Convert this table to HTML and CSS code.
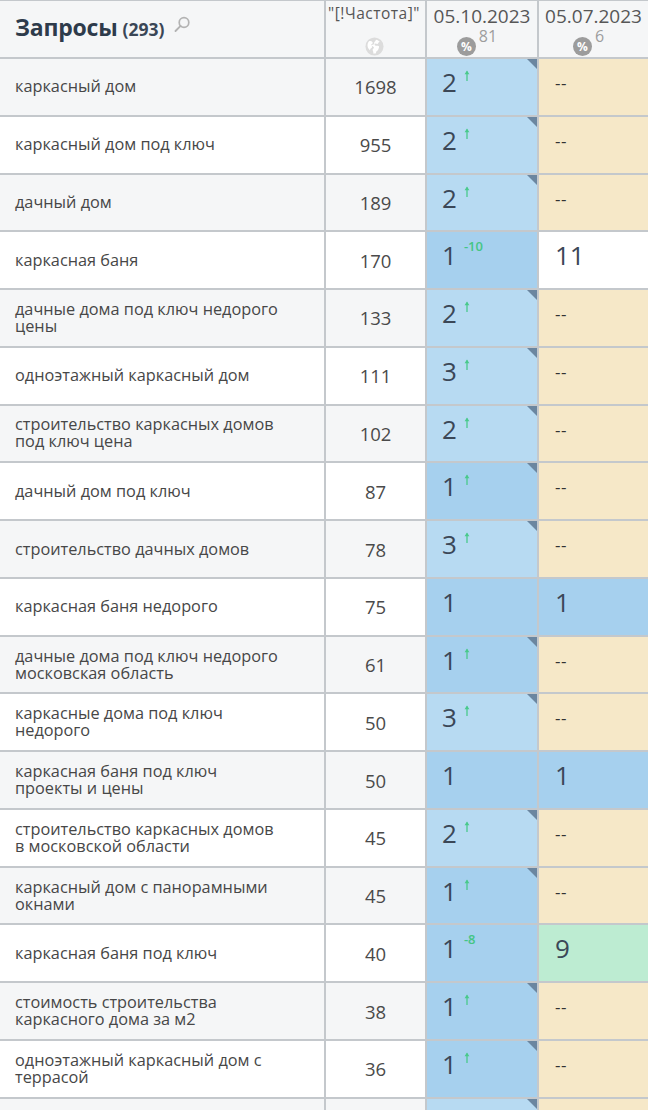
FILE: index.html
```html
<!DOCTYPE html>
<html lang="ru">
<head>
<meta charset="utf-8">
<title>Запросы</title>
<link rel="stylesheet" href="styles.css">
</head>
<body>
<div class="table">
  <div class="row head">
    <div class="cell c-query">
      <span class="title">Запросы</span>
      <span class="count">(293)</span>
      <svg class="search" width="18" height="17" viewBox="0 0 18 17"><circle cx="11" cy="6.5" r="4.8" fill="none" stroke="#b3b3b3" stroke-width="1.7"/><line x1="7.6" y1="9.9" x2="2.5" y2="15" stroke="#b3b3b3" stroke-width="1.9" stroke-linecap="round"/></svg>
    </div>
    <div class="cell c-freq">
      <div class="freq-label">"[!Частота]"</div>
      <svg class="globe" width="19" height="19" viewBox="0 0 20 20"><circle cx="10" cy="10" r="9.5" fill="#dcdcdc"/><path d="M4.2 4.6c1.4-.6 2.8-.2 3.6.6.7.8.2 1.8-.6 2.2-.9.4-.8 1.4-.2 2 .8.8.4 2-.5 2.4-.8.4-1.3 1.3-1.1 2.3-1.4-1-2.4-2.6-2.7-4.3-.2-1.9.3-3.8 1.5-5.2zM11.6 2.8c1.6.3 3 1.1 4 2.3-.8.2-1.5.7-1.7 1.5-.3.9-1.2 1-1.8.5-.7-.6-1.8-.4-2 .5-.2.8.5 1.5 1.3 1.5h2.1c1 0 1.6.8 1.3 1.7l-.8 2.4c-.3.9-1 1.6-1.9 1.900l-.8 2.2c-.9.2-1.8.2-2.7.1.4-1 .3-2.1-.3-3-.6-.9-.3-2 .6-2.4.6-.3.7-1.100.2-1.6-.8-.8-1.9-1-2.9-.7.5-.9 1.4-1.5 2.4-1.7.8-.2 1.3-.9 1.1-1.7-.2-.7.3-1.5.9-1.5z" fill="#fff"/></svg>
    </div>
    <div class="cell c-date">
      <div class="date">05.10.2023</div>
      <div class="meta"><span class="pct">%</span><span class="pct-num">81</span></div>
    </div>
    <div class="cell c-date">
      <div class="date">05.07.2023</div>
      <div class="meta"><span class="pct">%</span><span class="pct-num">6</span></div>
    </div>
  </div>

  <div class="row odd">
    <div class="cell c-query">каркасный дом</div>
    <div class="cell c-freq">1698</div>
    <div class="cell c-pos blue-l mark"><span class="num">2</span><svg class="up" width="6" height="11" viewBox="0 0 6 11"><path d="M3 1.5V11" stroke="#49c98b" stroke-width="1.3"/><path d="M0.6 4.2L3 0.5l2.4 3.7z" fill="#49c98b"/></svg></div>
    <div class="cell c-pos beige"><span class="dash">--</span></div>
  </div>

  <div class="row">
    <div class="cell c-query">каркасный дом под ключ</div>
    <div class="cell c-freq">955</div>
    <div class="cell c-pos blue-l mark"><span class="num">2</span><svg class="up" width="6" height="11" viewBox="0 0 6 11"><path d="M3 1.5V11" stroke="#49c98b" stroke-width="1.3"/><path d="M0.6 4.2L3 0.5l2.4 3.7z" fill="#49c98b"/></svg></div>
    <div class="cell c-pos beige"><span class="dash">--</span></div>
  </div>

  <div class="row odd">
    <div class="cell c-query">дачный дом</div>
    <div class="cell c-freq">189</div>
    <div class="cell c-pos blue-l mark"><span class="num">2</span><svg class="up" width="6" height="11" viewBox="0 0 6 11"><path d="M3 1.5V11" stroke="#49c98b" stroke-width="1.3"/><path d="M0.6 4.2L3 0.5l2.4 3.7z" fill="#49c98b"/></svg></div>
    <div class="cell c-pos beige"><span class="dash">--</span></div>
  </div>

  <div class="row">
    <div class="cell c-query">каркасная баня</div>
    <div class="cell c-freq">170</div>
    <div class="cell c-pos blue-d"><span class="num">1</span><span class="delta">-10</span></div>
    <div class="cell c-pos white"><span class="num">11</span></div>
  </div>

  <div class="row odd">
    <div class="cell c-query">дачные дома под ключ недорого<br>цены</div>
    <div class="cell c-freq">133</div>
    <div class="cell c-pos blue-l mark"><span class="num">2</span><svg class="up" width="6" height="11" viewBox="0 0 6 11"><path d="M3 1.5V11" stroke="#49c98b" stroke-width="1.3"/><path d="M0.6 4.2L3 0.5l2.4 3.7z" fill="#49c98b"/></svg></div>
    <div class="cell c-pos beige"><span class="dash">--</span></div>
  </div>

  <div class="row">
    <div class="cell c-query">одноэтажный каркасный дом</div>
    <div class="cell c-freq">111</div>
    <div class="cell c-pos blue-l mark"><span class="num">3</span><svg class="up" width="6" height="11" viewBox="0 0 6 11"><path d="M3 1.5V11" stroke="#49c98b" stroke-width="1.3"/><path d="M0.6 4.2L3 0.5l2.4 3.7z" fill="#49c98b"/></svg></div>
    <div class="cell c-pos beige"><span class="dash">--</span></div>
  </div>

  <div class="row odd">
    <div class="cell c-query">строительство каркасных домов<br>под ключ цена</div>
    <div class="cell c-freq">102</div>
    <div class="cell c-pos blue-l mark"><span class="num">2</span><svg class="up" width="6" height="11" viewBox="0 0 6 11"><path d="M3 1.5V11" stroke="#49c98b" stroke-width="1.3"/><path d="M0.6 4.2L3 0.5l2.4 3.7z" fill="#49c98b"/></svg></div>
    <div class="cell c-pos beige"><span class="dash">--</span></div>
  </div>

  <div class="row">
    <div class="cell c-query">дачный дом под ключ</div>
    <div class="cell c-freq">87</div>
    <div class="cell c-pos blue-d mark"><span class="num">1</span><svg class="up" width="6" height="11" viewBox="0 0 6 11"><path d="M3 1.5V11" stroke="#49c98b" stroke-width="1.3"/><path d="M0.6 4.2L3 0.5l2.4 3.7z" fill="#49c98b"/></svg></div>
    <div class="cell c-pos beige"><span class="dash">--</span></div>
  </div>

  <div class="row odd">
    <div class="cell c-query">строительство дачных домов</div>
    <div class="cell c-freq">78</div>
    <div class="cell c-pos blue-l mark"><span class="num">3</span><svg class="up" width="6" height="11" viewBox="0 0 6 11"><path d="M3 1.5V11" stroke="#49c98b" stroke-width="1.3"/><path d="M0.6 4.2L3 0.5l2.4 3.7z" fill="#49c98b"/></svg></div>
    <div class="cell c-pos beige"><span class="dash">--</span></div>
  </div>

  <div class="row">
    <div class="cell c-query">каркасная баня недорого</div>
    <div class="cell c-freq">75</div>
    <div class="cell c-pos blue-d"><span class="num">1</span></div>
    <div class="cell c-pos blue-d"><span class="num">1</span></div>
  </div>

  <div class="row odd">
    <div class="cell c-query">дачные дома под ключ недорого<br>московская область</div>
    <div class="cell c-freq">61</div>
    <div class="cell c-pos blue-d mark"><span class="num">1</span><svg class="up" width="6" height="11" viewBox="0 0 6 11"><path d="M3 1.5V11" stroke="#49c98b" stroke-width="1.3"/><path d="M0.6 4.2L3 0.5l2.4 3.7z" fill="#49c98b"/></svg></div>
    <div class="cell c-pos beige"><span class="dash">--</span></div>
  </div>

  <div class="row">
    <div class="cell c-query">каркасные дома под ключ<br>недорого</div>
    <div class="cell c-freq">50</div>
    <div class="cell c-pos blue-l mark"><span class="num">3</span><svg class="up" width="6" height="11" viewBox="0 0 6 11"><path d="M3 1.5V11" stroke="#49c98b" stroke-width="1.3"/><path d="M0.6 4.2L3 0.5l2.4 3.7z" fill="#49c98b"/></svg></div>
    <div class="cell c-pos beige"><span class="dash">--</span></div>
  </div>

  <div class="row odd">
    <div class="cell c-query">каркасная баня под ключ<br>проекты и цены</div>
    <div class="cell c-freq">50</div>
    <div class="cell c-pos blue-d"><span class="num">1</span></div>
    <div class="cell c-pos blue-d"><span class="num">1</span></div>
  </div>

  <div class="row">
    <div class="cell c-query">строительство каркасных домов<br>в московской области</div>
    <div class="cell c-freq">45</div>
    <div class="cell c-pos blue-l mark"><span class="num">2</span><svg class="up" width="6" height="11" viewBox="0 0 6 11"><path d="M3 1.5V11" stroke="#49c98b" stroke-width="1.3"/><path d="M0.6 4.2L3 0.5l2.4 3.7z" fill="#49c98b"/></svg></div>
    <div class="cell c-pos beige"><span class="dash">--</span></div>
  </div>

  <div class="row odd">
    <div class="cell c-query">каркасный дом с панорамными<br>окнами</div>
    <div class="cell c-freq">45</div>
    <div class="cell c-pos blue-d mark"><span class="num">1</span><svg class="up" width="6" height="11" viewBox="0 0 6 11"><path d="M3 1.5V11" stroke="#49c98b" stroke-width="1.3"/><path d="M0.6 4.2L3 0.5l2.4 3.7z" fill="#49c98b"/></svg></div>
    <div class="cell c-pos beige"><span class="dash">--</span></div>
  </div>

  <div class="row">
    <div class="cell c-query">каркасная баня под ключ</div>
    <div class="cell c-freq">40</div>
    <div class="cell c-pos blue-d"><span class="num">1</span><span class="delta">-8</span></div>
    <div class="cell c-pos green"><span class="num">9</span></div>
  </div>

  <div class="row odd">
    <div class="cell c-query">стоимость строительства<br>каркасного дома за м2</div>
    <div class="cell c-freq">38</div>
    <div class="cell c-pos blue-d mark"><span class="num">1</span><svg class="up" width="6" height="11" viewBox="0 0 6 11"><path d="M3 1.5V11" stroke="#49c98b" stroke-width="1.3"/><path d="M0.6 4.2L3 0.5l2.4 3.7z" fill="#49c98b"/></svg></div>
    <div class="cell c-pos beige"><span class="dash">--</span></div>
  </div>

  <div class="row">
    <div class="cell c-query">одноэтажный каркасный дом с<br>террасой</div>
    <div class="cell c-freq">36</div>
    <div class="cell c-pos blue-d mark"><span class="num">1</span><svg class="up" width="6" height="11" viewBox="0 0 6 11"><path d="M3 1.5V11" stroke="#49c98b" stroke-width="1.3"/><path d="M0.6 4.2L3 0.5l2.4 3.7z" fill="#49c98b"/></svg></div>
    <div class="cell c-pos beige"><span class="dash">--</span></div>
  </div>

  <div class="row odd">
    <div class="cell c-query"></div>
    <div class="cell c-freq"></div>
    <div class="cell c-pos blue-l mark"><span class="num"></span><svg class="up up-solo" width="6" height="11" viewBox="0 0 6 11"><path d="M3 1.5V11" stroke="#49c98b" stroke-width="1.3"/><path d="M0.6 4.2L3 0.5l2.4 3.7z" fill="#49c98b"/></svg></div>
    <div class="cell c-pos beige"></div>
  </div>
</div>
</body>
</html>
```

FILE: styles.css
```css
html, body {
  margin: 0;
  padding: 0;
  background: #ffffff;
}

body {
  width: 648px;
  height: 1110px;
  overflow: hidden;
  font-family: "Open Sans", "Liberation Sans", sans-serif;
  color: #454545;
}

.table {
  display: flex;
  flex-direction: column;
  width: 648px;
  border-top: 1px solid #c4c8cc;
}

.row {
  display: grid;
  grid-template-columns: 326px 101px 112px 109px;
  height: 57.78px;
  flex: none;
  background: #ffffff;
}

.row.odd {
  background: #f5f6f7;
}

.row.head {
  height: 58px;
  background: #f5f6f7;
}

.cell {
  box-sizing: border-box;
  border-right: 2px solid #c4c8cc;
  border-bottom: 2px solid #c4c8cc;
  position: relative;
  min-width: 0;
}

.cell:last-child {
  border-right: none;
}

/* query column */
.c-query {
  display: flex;
  align-items: center;
  padding: 0 12px 0 15px;
  font-size: 16.3px;
  line-height: 17px;
  color: #474747;
}

.head .c-query {
  align-items: center;
  padding-bottom: 4px;
}

.title {
  font-size: 23px;
  font-weight: 700;
  color: #2e3b4b;
  letter-spacing: -0.2px;
  line-height: 30px;
}

.count {
  font-size: 17.5px;
  font-weight: 700;
  color: #3a4656;
  margin-left: 5px;
  margin-top: 3px;
  line-height: 24px;
}

.search {
  margin-left: 9px;
  margin-top: -6px;
}

/* frequency column */
.c-freq {
  display: flex;
  align-items: center;
  justify-content: center;
  font-size: 18.5px;
  color: #4a4a4a;
}

.head .c-freq {
  flex-direction: column;
  justify-content: flex-start;
  padding-top: 2px;
}

.freq-label {
  font-size: 15.5px;
  line-height: 20px;
  color: #555;
  white-space: nowrap;
  letter-spacing: 0.5px;
  margin-left: -3px;
}

.globe {
  margin-top: 14px;
  margin-left: -3px;
}

/* date columns */
.c-date {
  display: flex;
  flex-direction: column;
  align-items: center;
  padding-top: 3px;
}

.date {
  font-size: 19px;
  line-height: 24px;
  color: #575757;
  white-space: nowrap;
}

.meta {
  display: flex;
  align-items: flex-start;
  margin-left: -10px;
}

.pct {
  width: 19px;
  height: 19px;
  border-radius: 50%;
  background: #9c9c9c;
  color: #ffffff;
  font-size: 12px;
  font-weight: 700;
  line-height: 19px;
  text-align: center;
  margin-top: 9px;
}

.pct-num {
  font-size: 16px;
  line-height: 16px;
  color: #9d9d9d;
  margin-left: 3px;
}

/* position cells */
.c-pos {
  display: flex;
  align-items: flex-start;
  padding: 7px 0 0 15px;
}

.c-pos:last-child {
  padding-left: 16px;
}

.num {
  font-size: 26px;
  line-height: 32px;
  color: #3b4757;
}

.up {
  margin: 4px 0 0 7px;
}

.up-solo {
  margin-left: 22px;
}

.delta {
  font-size: 13px;
  line-height: 14px;
  font-weight: 600;
  color: #45c585;
  margin-left: 7px;
  margin-top: 0;
}

.dash {
  font-size: 17px;
  line-height: 20px;
  color: #333;
  padding-top: 7px;
  letter-spacing: 0.5px;
}

.blue-l {
  background: #b7daf2;
}

.blue-d {
  background: #a6d0ee;
}

.beige {
  background: #f6e8c8;
}

.white {
  background: #ffffff;
}

.green {
  background: #bdecd2;
}

.mark::after {
  content: "";
  position: absolute;
  top: 0;
  right: 0;
  width: 0;
  height: 0;
  border-top: 10px solid #6b86a0;
  border-left: 10px solid transparent;
}
```
